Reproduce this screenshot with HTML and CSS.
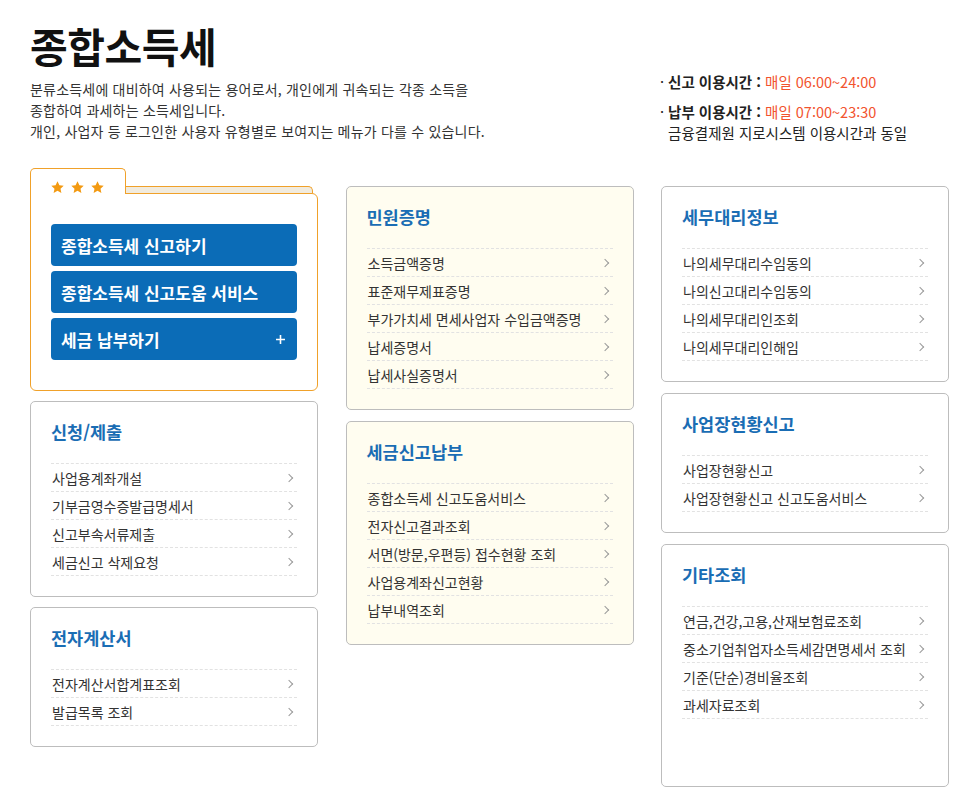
FILE: index.html
```html
<!DOCTYPE html>
<html lang="ko">
<head>
    <meta charset="UTF-8">
    <title>종합소득세</title>
    <link rel="stylesheet" href="styles.css">
</head>
<body>
    <div class="page">
        <div class="header">
            <div class="intro">
                <h1>종합소득세</h1>
                <p class="desc">분류소득세에 대비하여 사용되는 용어로서, 개인에게 귀속되는 각종 소득을<br>종합하여 과세하는 소득세입니다.<br>개인, 사업자 등 로그인한 사용자 유형별로 보여지는 메뉴가 다를 수 있습니다.</p>
            </div>
            <ul class="hours">
                <li>· <b>신고 이용시간 :</b> <span class="red">매일 06:00~24:00</span></li>
                <li>· <b>납부 이용시간 :</b> <span class="red">매일 07:00~23:30</span><br>&nbsp;&nbsp;금융결제원 지로시스템 이용시간과 동일</li>
            </ul>
        </div>

        <div class="columns">
            <div class="col col-first">
                <div class="folder">
                    <div class="folder-head">
                        <div class="folder-tab">
                            <svg width="54" height="13" viewBox="0 0 54 13">
                                <path fill="#f39a12" d="M6.5 0.3l1.9 4 4.3.5-3.2 2.9.9 4.3-3.9-2.2-3.9 2.2.9-4.3L.3 4.8l4.3-.5z"/>
                                <path fill="#f39a12" transform="translate(20 0)" d="M6.5 0.3l1.9 4 4.3.5-3.2 2.9.9 4.3-3.9-2.2-3.9 2.2.9-4.3L.3 4.8l4.3-.5z"/>
                                <path fill="#f39a12" transform="translate(40 0)" d="M6.5 0.3l1.9 4 4.3.5-3.2 2.9.9 4.3-3.9-2.2-3.9 2.2.9-4.3L.3 4.8l4.3-.5z"/>
                            </svg>
                        </div>
                        <div class="folder-strip"></div>
                    </div>
                    <div class="folder-body">
                        <a class="btn">종합소득세 신고하기</a>
                        <a class="btn">종합소득세 신고도움 서비스</a>
                        <a class="btn">세금 납부하기
                            <svg width="9" height="9" viewBox="0 0 9 9"><path d="M4.5 0v9M0 4.5h9" stroke="#fff" stroke-width="1.6"/></svg>
                        </a>
                    </div>
                </div>

                <div class="card">
                    <h2>신청/제출</h2>
                    <ul class="links">
                        <li>사업용계좌개설</li>
                        <li>기부금영수증발급명세서</li>
                        <li>신고부속서류제출</li>
                        <li>세금신고 삭제요청</li>
                    </ul>
                </div>

                <div class="card">
                    <h2>전자계산서</h2>
                    <ul class="links">
                        <li>전자계산서합계표조회</li>
                        <li>발급목록 조회</li>
                    </ul>
                </div>
            </div>

            <div class="col col-low">
                <div class="card cream">
                    <h2>민원증명</h2>
                    <ul class="links">
                        <li>소득금액증명</li>
                        <li>표준재무제표증명</li>
                        <li>부가가치세 면세사업자 수입금액증명</li>
                        <li>납세증명서</li>
                        <li>납세사실증명서</li>
                    </ul>
                </div>

                <div class="card cream">
                    <h2>세금신고납부</h2>
                    <ul class="links">
                        <li>종합소득세 신고도움서비스</li>
                        <li>전자신고결과조회</li>
                        <li>서면(방문,우편등) 접수현황 조회</li>
                        <li>사업용계좌신고현황</li>
                        <li>납부내역조회</li>
                    </ul>
                </div>
            </div>

            <div class="col col-low">
                <div class="card">
                    <h2>세무대리정보</h2>
                    <ul class="links">
                        <li>나의세무대리수임동의</li>
                        <li>나의신고대리수임동의</li>
                        <li>나의세무대리인조회</li>
                        <li>나의세무대리인해임</li>
                    </ul>
                </div>

                <div class="card">
                    <h2>사업장현황신고</h2>
                    <ul class="links">
                        <li>사업장현황신고</li>
                        <li>사업장현황신고 신고도움서비스</li>
                    </ul>
                </div>

                <div class="card card-tall">
                    <h2>기타조회</h2>
                    <ul class="links">
                        <li>연금,건강,고용,산재보험료조회</li>
                        <li>중소기업취업자소득세감면명세서 조회</li>
                        <li>기준(단순)경비율조회</li>
                        <li>과세자료조회</li>
                    </ul>
                </div>
            </div>
        </div>
    </div>
</body>
</html>
```

FILE: styles.css
```css
body {
    margin: 0;
    font-family: "Noto Sans CJK KR", "Noto Sans", sans-serif;
    color: #222;
    background-color: #fff;
}
.page {
    width: 919px;
    padding: 20px 0 0 30px;
}
.header {
    display: flex;
    justify-content: space-between;
}
h1 {
    margin: 0;
    font-size: 41px;
    line-height: 50px;
    font-weight: bold;
    letter-spacing: -0.5px;
    color: #111;
}
.desc {
    margin: 9px 0 0;
    font-size: 14px;
    line-height: 21px;
    letter-spacing: 0.2px;
    color: #333;
}
.hours {
    list-style: none;
    margin: 51px 0 0;
    padding: 0;
    width: 289px;
    font-size: 14.5px;
    line-height: 21px;
    color: #222;
}
.hours li + li {
    margin-top: 9px;
}
.red {
    color: #f2532e;
}
.columns {
    display: flex;
    justify-content: space-between;
    align-items: flex-start;
    margin-top: 25px;
}
.col {
    width: 288px;
    display: flex;
    flex-direction: column;
    gap: 11px;
}
.col-first {
    gap: 10px;
}
.col-low {
    margin-top: 18px;
}

/* folder card */
.folder-head {
    display: flex;
    align-items: flex-end;
    height: 25px;
}
.folder-tab {
    position: relative;
    z-index: 1;
    box-sizing: border-box;
    width: 96px;
    height: 26px;
    margin-bottom: -1px;
    padding: 12px 0 0 20px;
    background: #fff;
    border: 1px solid #f0a12a;
    border-bottom: none;
    border-radius: 5px 5px 0 0;
}
.folder-tab svg {
    display: block;
}
.folder-strip {
    flex: 1;
    height: 6px;
    margin-right: 5px;
    background: #f1ebde;
    border-top: 1px solid #f0a12a;
    border-right: 1px solid #f0a12a;
    border-radius: 0 5px 0 0;
}
.folder-body {
    display: flex;
    flex-direction: column;
    gap: 5px;
    padding: 30px 20px 30px;
    border: 1px solid #f0a12a;
    border-radius: 0 6px 6px 6px;
}
.btn {
    display: flex;
    align-items: center;
    justify-content: space-between;
    height: 42px;
    padding: 0 12px 0 10px;
    background: #0b6cb7;
    color: #fff;
    font-size: 17px;
    font-weight: bold;
    border-radius: 4px;
}

/* menu cards */
.card {
    box-sizing: border-box;
    padding: 19px 20px 20px;
    border: 1px solid #bdbdbd;
    border-radius: 5px;
    background: #fff;
}
.card.cream {
    background: #fffdf0;
}
.card-tall {
    min-height: 243px;
}
.card h2 {
    margin: 0 0 20px;
    font-size: 17.5px;
    line-height: 22px;
    font-weight: bold;
    color: #1a6db4;
}
.links {
    list-style: none;
    margin: 0;
    padding: 0;
    border-top: 1px dashed #e2e2e2;
}
.links li {
    display: flex;
    align-items: center;
    justify-content: space-between;
    height: 27px;
    padding-left: 1px;
    border-bottom: 1px dashed #e2e2e2;
    font-size: 14px;
    color: #333;
}
.links li::after {
    content: "";
    width: 5px;
    height: 5px;
    margin-right: 5px;
    border-top: 1px solid #9a9a9a;
    border-right: 1px solid #9a9a9a;
    transform: rotate(45deg);
}
```
